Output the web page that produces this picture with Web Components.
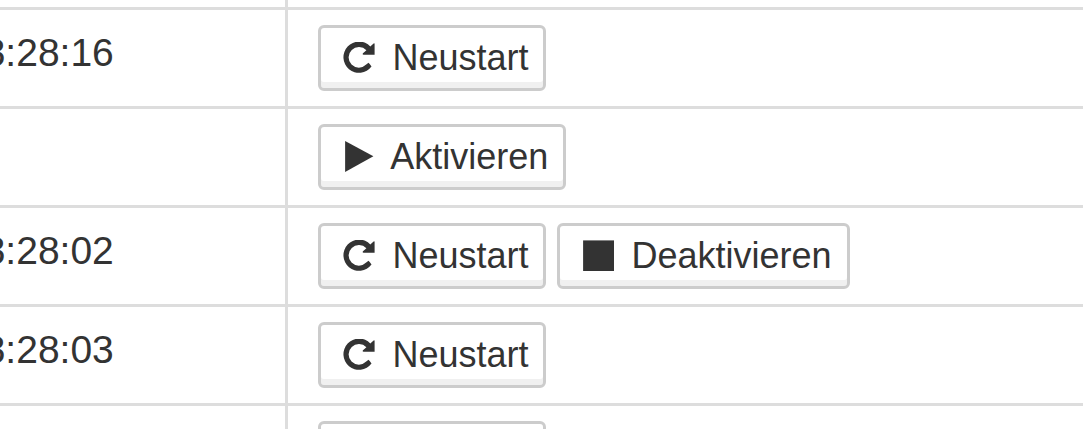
<!DOCTYPE html>
<html lang="de">
<head>
<meta charset="utf-8">
<title>Dienste</title>
<style>
html,body{margin:0;height:100%;overflow:hidden;background:#fff}
body{font-family:"Liberation Sans",Arial,sans-serif;color:#333}
</style>
</head>
<body>
<service-table>
  <service-row time="3:28:16"><action-button icon="repeat">Neustart</action-button></service-row>
  <service-row><action-button icon="play">Aktivieren</action-button></service-row>
  <service-row time="3:28:02"><action-button icon="repeat">Neustart</action-button><action-button icon="stop">Deaktivieren</action-button></service-row>
  <service-row time="3:28:03"><action-button icon="repeat">Neustart</action-button></service-row>
  <service-row><action-button icon="repeat"></action-button></service-row>
</service-table>
<script>
const icons = {
  repeat: '<path d="M27.3 4.4 30.6 1.4Q31.5 .8 31.6 1.8V12.7H20.6Q19 12.5 20 11.3L23.4 8.3A10.3 10.3 0 1 0 23.2 22.6L25.5 20.7Q26.8 21.6 28.5 24.6A15.6 15.6 0 1 1 27.3 4.4Z"/>',
  play: '<path d="M2.1 0 30.4 15.3 2.1 31.1Z"/>',
  stop: '<path d="M1.1.4H32V31H1.1Z"/>'
};

class ServiceTable extends HTMLElement {
  constructor() {
    super();
    this.attachShadow({mode: 'open'}).innerHTML = `
      <style>
        :host{display:block;height:422px;padding-top:7px;overflow:hidden;
          background:linear-gradient(#ddd,#ddd) 285px 0/3px 100% no-repeat #fff}
      </style><slot></slot>`;
  }
}

class ServiceRow extends HTMLElement {
  constructor() {
    super();
    this.attachShadow({mode: 'open'}).innerHTML = `
      <style>
        :host{display:grid;grid-template-columns:288px 1fr;box-sizing:border-box;height:99px;border-top:3px solid #ddd}
        .time{display:flex;justify-content:flex-end;box-sizing:border-box;width:113.8px;padding-top:20px;
          font-size:39px;line-height:45px;white-space:nowrap}
        .actions{display:flex;align-items:flex-start;gap:11px;padding:15px 0 0 30px}
      </style>
      <div class="time"></div><div class="actions"><slot></slot></div>`;
    this.shadowRoot.querySelector('.time').textContent = this.getAttribute('time') || '';
  }
}

class ActionButton extends HTMLElement {
  constructor() {
    super();
    this.attachShadow({mode: 'open'}).innerHTML = `
      <style>
        :host{display:block}
        button{display:flex;align-items:flex-start;box-sizing:border-box;min-width:228px;height:66px;margin:0;
          padding:0 14.6px 0 22px;border:3px solid #ccc;border-radius:6px;background:#fff;
          box-shadow:inset 0 -6px #f0f0f0;color:inherit;font:36px/42px "Liberation Sans",Arial,sans-serif;white-space:nowrap}
        :host([icon=stop]) button{padding-right:15.4px}
        svg{display:block;flex:none;width:32px;height:32px;margin-top:13.6px;fill:currentColor}
        .label{padding-top:9px;margin-left:17.4px}
        :host([icon=play]) .label{margin-left:15.2px}
      </style>
      <button type="button"><svg viewBox="0 0 32 32" aria-hidden="true">${icons[this.getAttribute('icon')]}</svg><span class="label"><slot></slot></span></button>`;
  }
}

customElements.define('service-table', ServiceTable);
customElements.define('service-row', ServiceRow);
customElements.define('action-button', ActionButton);
</script>
</body>
</html>
